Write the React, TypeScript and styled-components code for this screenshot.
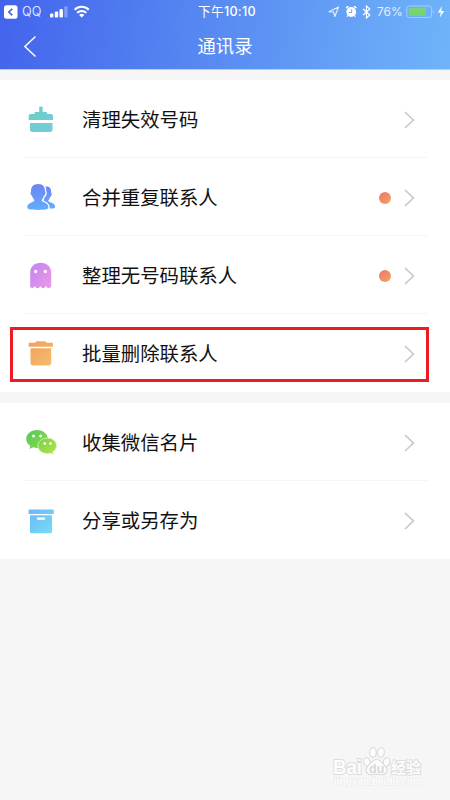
import React from 'react';
import styled, { createGlobalStyle } from 'styled-components';

const GlobalStyle = createGlobalStyle`
  *, *::before, *::after { box-sizing: border-box; }
  body { margin: 0; background: #f6f6f6; font-family: Roboto, "Noto Sans CJK SC", sans-serif; }
  svg { display: block; flex: none; overflow: visible; }
`;

const Screen = styled.div`
  position: relative;
  width: 450px;
  height: 800px;
  overflow: hidden;
  display: flex;
  flex-direction: column;
  background: #f6f6f6;
`;

const Header = styled.header`
  height: 70px;
  flex: none;
  background: linear-gradient(97deg, #4364ec 0%, #5586f1 42%, #6fb4fa 100%);
  border-bottom: 1px solid #b3cffb;
  color: #fff;
`;

const StatusBar = styled.div`
  height: 23px;
  display: grid;
  grid-template-columns: 1fr auto 1fr;
  align-items: center;
  font-family: Inter, "Noto Sans CJK SC", sans-serif;
  font-size: 12px;
  line-height: 23px;
`;

const StatusLeft = styled.div`
  display: flex;
  align-items: center;
  padding-left: 4px;
`;

const Carrier = styled.span`
  width: 32px;
  padding-left: 4px;
  font-size: 12.7px;
  color: #dbe4fd;
`;

const Time = styled.div`
  font-size: 12.6px;
  font-weight: 400;
  padding-left: 4px;
  letter-spacing: 0.3px;
`;

const Clock = styled.span`
  font-weight: 500;
`;

const StatusRight = styled.div`
  display: flex;
  align-items: center;
  justify-content: flex-end;
  padding-right: 5px;
`;

const Percent = styled.span`
  width: 29px;
  font-size: 12px;
  color: #e3edff;
`;

const TitleBar = styled.div`
  height: 46px;
  display: grid;
  grid-template-columns: 60px 1fr 60px;
  align-items: center;
`;

const BackButton = styled.button`
  padding: 0 0 0 24px;
  border: 0;
  background: none;
  color: inherit;
`;

const Title = styled.h1`
  margin: 0;
  padding-top: 1px;
  font-size: 18.3px;
  line-height: 46px;
  font-weight: 400;
  text-align: center;
`;

const Group = styled.section<{ $gap: number }>`
  flex: none;
  margin-top: ${(p) => p.$gap}px;
  padding: 0 22px 0 24px;
  background: #fff;
`;

const Row = styled.div`
  position: relative;
  height: 78px;
  display: flex;
  align-items: center;
  padding-right: 13px;
  & + & { box-shadow: 0 -1px 0 #f5f5f5; }
`;

const IconSlot = styled.div`
  width: 34px;
  height: 34px;
  margin-right: 24px;
  flex: none;
`;

const Label = styled.span`
  flex: 1;
  font-family: "Noto Sans CJK SC", sans-serif;
  font-size: 19.4px;
  line-height: 28px;
  color: #111;
`;

const Dot = styled.span`
  width: 12px;
  height: 12px;
  margin-top: 1px;
  margin-right: 13px;
  border-radius: 50%;
  background: linear-gradient(135deg, #ec7669, #f2a564);
`;

const Highlight = styled.div`
  position: absolute;
  left: -14px;
  top: 13px;
  width: 419px;
  height: 55px;
  border: 3px solid #ed1c24;
`;

const Watermark = styled.div`
  position: absolute;
  left: 330px;
  top: 742px;
`;

type GradientProps = { id: string; from: string; to: string };
const Gradient = ({ id, from, to }: GradientProps) => (
  <linearGradient id={id} x1="0" y1="0" x2="1" y2="1">
    <stop stopColor={from} />
    <stop offset="1" stopColor={to} />
  </linearGradient>
);

const BrushIcon = () => (
  <svg width="34" height="34" viewBox="0 0 34 34">
    <defs><Gradient id="brush" from="#69cfc4" to="#74cbdc" /></defs>
    <path fill="url(#brush)" d="M15.2 4.8h3.5v5.1H22c.8 0 1.2.5 1.2 1.2v.9h3.6c1.3 0 2.2.8 2.2 2v3.9H4.700V14c0-1.200.9-2 2.200-2h3.600v-.9c0-.7.5-1.200 1.200-1.200h3.500zM6 20.900h22.500v6.700c0 1.600-.9 2.400-2.400 2.400H8.400C6.900 30 6 29.200 6 27.600z" />
  </svg>
);

const PeopleIcon = () => (
  <svg width="34" height="34" viewBox="0 0 34 34">
    <defs>
      <linearGradient id="people" gradientUnits="userSpaceOnUse" x1="0" y1="4" x2="0" y2="30"><stop stopColor="#6d83f3" /><stop offset="1" stopColor="#62aefb" /></linearGradient>
    </defs>
    <path fill="url(#people)" d="M20.500 6.900c4.500-1.500 7 1.200 6.600 5.300l.6 1.800c-.1 1.600-.7 2.600-1.600 3.100-.4 1.600-1 2.500-1.800 3.200l.2 1.200c3.500 1.400 6.300 2.200 6.600 5.100.1 1.500-1.100 2-2.900 2H19z" />
    <path fill="url(#people)" stroke="#fff" strokeWidth="2.600" paintOrder="stroke" d="M14.200 4c4.500 0 7 2.800 6.700 7l.6 1.600c-.1 2-.7 3.100-1.700 3.500-.4 1.700-1.100 2.800-2.100 3.600l.2 1.600c3.300 1.700 6.500 2.200 6.500 6 0 2-2.100 2.600-10.300 2.600S3.300 29.300 3.300 27.300c0-3.800 3.600-4.300 6.800-6l.2-1.600c-1-.8-1.700-1.900-2.100-3.600-1-.4-1.600-1.500-1.700-3.500l.6-1.600C6.800 6.800 9.600 4 14.200 4z" />
  </svg>
);

const GhostIcon = () => (
  <svg width="34" height="34" viewBox="0 0 34 34">
    <defs><Gradient id="ghost" from="#c284f5" to="#eb99e5" /></defs>
    <path fill="url(#ghost)" d="M6.200 14.800C6.200 8.600 10.700 4.800 16.700 4.800s10.500 3.800 10.500 10v13.300c0 2-3.300 2.700-4.300 1.100-.8-1.300-1.400-1.300-2 0-.9 1.500-3 1.500-3.700 0-.5-1.300-1.200-1.300-1.700 0-.8 1.500-3.100 1.500-3.900 0-.6-1.300-1.200-1.300-2 0-1.100 1.600-3.400.9-3.400-1.100z" />
    <circle cx="11.700" cy="13.500" r="1.650" fill="#fff" />
    <circle cx="21.300" cy="13.500" r="1.650" fill="#fff" />
  </svg>
);

const TrashIcon = () => (
  <svg width="34" height="34" viewBox="0 0 34 34">
    <defs><Gradient id="trash" from="#f09d61" to="#f6bf68" /></defs>
    <path fill="url(#trash)" d="M11 6.800 12.500 5.200h8.700L22.700 6.800h5.100c.8 0 1.200.5 1.200 1.200v2.800H4.700V8c0-.7.4-1.200 1.200-1.200zM6.500 12.200h20.700v14.900c0 1.600-.9 2.500-2.500 2.500H9c-1.600 0-2.500-.9-2.500-2.500z" />
  </svg>
);

const ChatIcon = () => (
  <svg width="34" height="34" viewBox="0 0 34 34">
    <defs>
      <Gradient id="chatBack" from="#55c85b" to="#8bdc45" />
      <Gradient id="chatFront" from="#7bd247" to="#b2e34c" />
    </defs>
    <path fill="url(#chatBack)" d="M13 5C7 5 2.200 9 2.200 14c0 2.900 1.600 5.300 4.100 7l-.8 3 3.600-1.700c1.400.5 2.700.6 4.100.6 6 0 10.700-4 10.700-8.900C23.900 9 19 5 13 5z" />
    <path fill="url(#chatFront)" stroke="#d9f3bd" strokeWidth=".8" d="M23.200 13c-5.200 0-9.300 3.500-9.300 7.800s4.100 7.700 9.300 7.700c1.200 0 2.400-.1 3.500-.5l2.700 1.500-.7-2.700c2.500-1.500 3.800-3.600 3.800-6 0-4.300-4.100-7.800-9.300-7.800z" />
    <g fill="#fff"><circle cx="9.500" cy="11" r="1.500" /><circle cx="16.700" cy="11" r="1.500" /><circle cx="20.700" cy="18.500" r="1.350" /><circle cx="26.500" cy="18.500" r="1.350" /></g>
  </svg>
);

const BoxIcon = () => (
  <svg width="34" height="34" viewBox="0 0 34 34">
    <defs><Gradient id="box" from="#6ab6fa" to="#76dff4" /></defs>
    <path fill="url(#box)" fillRule="evenodd" d="M5.500 6.200h23.400c.6 0 .9.300.9.900v3.900H4.600V7.100c0-.6.300-.9.900-.9zM6 12.200h22v17.500c0 1.300-.8 2-2 2H8c-1.300 0-2-.7-2-2zM13 14.700v2.500h8v-2.500z" transform="translate(0 .8) scale(1 .93)" />
  </svg>
);

const Chevron = () => (
  <svg width="11" height="19" viewBox="0 0 11 19" fill="none" stroke="#c9c9c9" strokeWidth="1.700">
    <path d="M1 2l8.400 8L1 18" />
  </svg>
);

const ReturnIcon = () => (
  <svg width="14" height="14" viewBox="0 0 14 14">
    <rect width="13.500" height="13.500" y=".3" rx="2.500" fill="#fff" />
    <path d="M8.300 3.800 4.900 7l3.400 3.300" fill="none" stroke="#4868df" strokeWidth="1.700" />
  </svg>
);

const SignalIcon = () => (
  <svg width="18" height="12" viewBox="0 0 18 12" fill="#fff">
    <rect x="0" y="7.500" width="3.400" height="4" rx="1" />
    <rect x="4.800" y="5.500" width="3.400" height="6" rx="1" />
    <rect x="9.500" y="3.100" width="3.400" height="8.400" rx="1" />
    <rect x="14.200" y="0.300" width="3.400" height="11.200" rx="1" opacity=".3" />
  </svg>
);

const WifiSvg = styled.svg`
  margin-left: 6px;
`;

const WifiIcon = () => (
  <WifiSvg width="16" height="12" viewBox="0 0 16 12" fill="none" stroke="#fff">
    <path d="M.6 3.700a10.200 10.200 0 0 1 14.200 0" strokeWidth="2" />
    <path d="M3.100 6.800a6.600 6.600 0 0 1 9.200 0" strokeWidth="1.900" />
    <path fill="#fff" stroke="none" d="M5.100 9a3.800 3.800 0 0 1 5.200 0L7.700 11.500z" />
  </WifiSvg>
);

const StatusIcons = () => (
  <svg width="50" height="14" viewBox="0 0 50 14">
    <path d="M2 6.700 11.500 2 7.800 11.600 6.700 7z" fill="none" stroke="#e9f1ff" strokeWidth="1.100" strokeLinejoin="round" />
    <g fill="#fff">
      <circle cx="24.200" cy="7" r="4.900" />
      <path d="M19 3.700a1.900 1.900 0 0 1 3.200-2zM29.400 3.700a1.900 1.900 0 0 0-3.200-2zM20.300 10.300l-.8 1.300.8.5 1.500-1.300zM28.100 10.300l.8 1.300-.8.5-1.500-1.300z" />
    </g>
    <path d="M24.700 4.200v3.300h-2.800" stroke="#6da5f6" fill="none" strokeWidth="1" />
    <path d="M36.200 4 42.800 10 39.500 13V1l3.300 3-6.600 6" fill="none" stroke="#fff" strokeWidth="1.200" />
  </svg>
);

const BatteryIcon = () => (
  <svg width="39" height="14" viewBox="0 0 39 14">
    <rect x=".8" y="1" width="24.800" height="11.500" rx="2.500" fill="none" stroke="#a9cdfb" strokeWidth="1" />
    <rect x="2.800" y="3" width="17" height="7.700" fill="#75d572" />
    <path d="M27 5v3.800c1.300-.6 1.300-3.200 0-3.800z" fill="#a9cdfb" />
    <path d="M36 1.200 31.800 7.500h3l-.9 5 4.300-6.600h-3z" fill="#fff" />
  </svg>
);

const WatermarkText = styled.text`
  font-family: "Liberation Sans", "Noto Sans CJK SC", sans-serif;
  font-weight: 700;
  paint-order: stroke;
`;

const WatermarkLogo = () => (
  <svg width="100" height="48" viewBox="0 0 100 48" stroke="#dcdcdc" strokeWidth="1.800" fill="#fdfdfd">
    <WatermarkText x="3" y="31.500" fontSize="19.500" textLength="29" lengthAdjust="spacingAndGlyphs">Bai</WatermarkText>
    <g strokeWidth="1.200">
      <ellipse cx="37" cy="20" rx="3.200" ry="4.500" transform="rotate(-18 37 20)" />
      <ellipse cx="43" cy="10.500" rx="3.300" ry="4.800" />
      <ellipse cx="51" cy="10.500" rx="3.300" ry="4.800" transform="rotate(10 51 10.500)" />
      <ellipse cx="56.500" cy="20" rx="3.200" ry="4.500" transform="rotate(18 56.500 20)" />
      <path d="M46.500 17.500c3.500 0 5.500 3.300 8.300 6 4.300 4.300 2 9.500-3 9-4-.6-6.500-.6-10.500 0-5 .5-7.300-4.700-3-9C41 20.800 43 17.500 46.500 17.500z" />
    </g>
    <WatermarkText x="39" y="30.500" fontSize="12.500" fill="#d8d8d8" stroke="none">du</WatermarkText>
    <WatermarkText x="61" y="30.500" fontSize="15" textLength="30">经验</WatermarkText>
    <WatermarkText x="4" y="43" fontSize="10" textLength="88" strokeWidth="1.200" stroke="#ebebeb">jingyan.baidu.com</WatermarkText>
  </svg>
);

type Item = { label: string; Icon: React.FC; dot?: boolean; marked?: boolean };

const cleanup: Item[] = [
  { label: '清理失效号码', Icon: BrushIcon },
  { label: '合并重复联系人', Icon: PeopleIcon, dot: true },
  { label: '整理无号码联系人', Icon: GhostIcon, dot: true },
  { label: '批量删除联系人', Icon: TrashIcon, marked: true },
];

const sharing: Item[] = [
  { label: '收集微信名片', Icon: ChatIcon },
  { label: '分享或另存为', Icon: BoxIcon },
];

const MenuGroup = ({ items, gap }: { items: Item[]; gap: number }) => (
  <Group $gap={gap}>
    {items.map(({ label, Icon, dot, marked }) => (
      <Row key={label}>
        <IconSlot><Icon /></IconSlot>
        <Label>{label}</Label>
        {dot && <Dot />}
        <Chevron />
        {marked && <Highlight />}
      </Row>
    ))}
  </Group>
);

export default function App() {
  return (
    <>
      <GlobalStyle />
      <Screen>
        <Header>
          <StatusBar>
            <StatusLeft>
              <ReturnIcon />
              <Carrier>QQ</Carrier>
              <SignalIcon />
              <WifiIcon />
            </StatusLeft>
            <Time>下午<Clock>10:10</Clock></Time>
            <StatusRight>
              <StatusIcons />
              <Percent>76%</Percent>
              <BatteryIcon />
            </StatusRight>
          </StatusBar>
          <TitleBar>
            <BackButton aria-label="返回">
              <svg width="12" height="21" viewBox="0 0 12 21" fill="none" stroke="#fff" strokeWidth="1.500">
                <path d="M11.500.5.900 10.500l10.600 10" />
              </svg>
            </BackButton>
            <Title>通讯录</Title>
          </TitleBar>
        </Header>
        <MenuGroup items={cleanup} gap={10} />
        <MenuGroup items={sharing} gap={11} />
        <Watermark><WatermarkLogo /></Watermark>
      </Screen>
    </>
  );
}
